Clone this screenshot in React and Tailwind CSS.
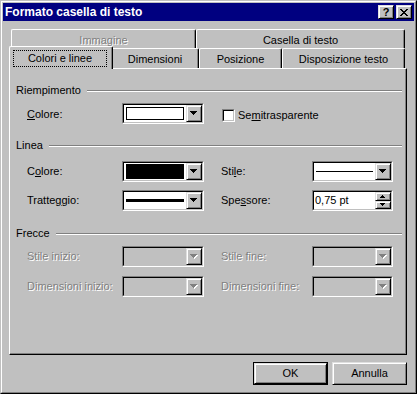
import React from "react";

const FONT = "font-['Liberation_Sans',Arial,sans-serif]";

function Arrow({ up = false, disabled = false, size = 7 }) {
  const h = Math.ceil(size / 2);
  const rows = [];
  for (let i = 0; i < h; i++) {
    const y = up ? h - 1 - i : i;
    rows.push(<rect key={i} x={i} y={y} width={size - 2 * i} height={1} />);
  }
  return (
    <svg width={size + 1} height={h + 1} shapeRendering="crispEdges" className="block">
      {disabled && (
        <g fill="#ffffff" transform="translate(1,1)">
          {rows}
        </g>
      )}
      <g fill={disabled ? "#808080" : "#000000"}>{rows}</g>
    </svg>
  );
}

function Raised({ className = "", children }) {
  return (
    <div
      className={`flex items-center justify-center bg-[#c0c0c0] border border-t-[#dfdfdf] border-l-[#dfdfdf] border-r-black border-b-black shadow-[inset_1px_1px_#fff,inset_-1px_-1px_#808080] ${className}`}
    >
      {children}
    </div>
  );
}

function Sunken({ className = "", innerClass = "", children }) {
  return (
    <div className={`border border-t-[#808080] border-l-[#808080] border-r-white border-b-white ${className}`}>
      <div
        className={`h-full w-full flex border border-t-black border-l-black border-r-[#c0c0c0] border-b-[#c0c0c0] ${innerClass}`}
      >
        {children}
      </div>
    </div>
  );
}

function Combo({ className, disabled = false, children }) {
  return (
    <Sunken className={`h-[21px] ${className}`} innerClass={disabled ? "bg-[#c0c0c0]" : "bg-white"}>
      <div className="flex-1 flex items-center pl-[2px] pr-[2px]">{children}</div>
      <Raised className="w-[16px] h-full">
        <Arrow disabled={disabled} />
      </Raised>
    </Sunken>
  );
}

function Header({ children, className = "" }) {
  return (
    <div className={`flex items-center h-[13px] ${className}`}>
      <span>{children}</span>
      <div className="flex-1 ml-[6px] h-[2px] border-t border-t-[#808080] border-b border-b-white" />
    </div>
  );
}

function Label({ children, className = "", disabled = false }) {
  return (
    <div
      className={`${className} whitespace-nowrap ${
        disabled ? "text-[#808080] [text-shadow:1px_1px_0_#fff]" : "text-black"
      }`}
    >
      {children}
    </div>
  );
}

function Tab({ children, className = "", disabled = false }) {
  return (
    <div
      className={`flex items-center justify-center pt-[2px] bg-[#c0c0c0] border-t border-l border-r border-t-white border-l-white border-r-black shadow-[inset_-1px_0_#808080] rounded-tl-[2px] rounded-tr-[2px] ${className}`}
    >
      <span className={disabled ? "text-[#808080] [text-shadow:1px_1px_0_#fff]" : "text-black"}>{children}</span>
    </div>
  );
}

export default function App() {
  return (
    <div className={`${FONT} text-[11px] leading-[13px] w-[417px] h-[394px] bg-[#c0c0c0] select-none`}>
      <div className="w-full h-full border border-t-[#c0c0c0] border-l-[#c0c0c0] border-r-black border-b-black">
        <div className="w-full h-full border border-t-white border-l-white border-r-[#808080] border-b-[#808080] p-[1px] flex flex-col">
          {/* Title bar */}
          <div className="h-[18px] bg-[#000080] flex items-center justify-between pl-[2px] pr-[2px]">
            <span className="text-white font-bold text-[12px] leading-[14px]">Formato casella di testo</span>
            <div className="flex items-center gap-[2px]">
              <Raised className="w-[16px] h-[14px]">
                <span className="font-bold text-[11px] leading-[11px] text-black">?</span>
              </Raised>
              <Raised className="w-[16px] h-[14px]">
                <svg width="8" height="7" shapeRendering="crispEdges" className="block">
                  <g fill="#000">
                    <rect x="0" y="0" width="2" height="1" />
                    <rect x="6" y="0" width="2" height="1" />
                    <rect x="1" y="1" width="2" height="1" />
                    <rect x="5" y="1" width="2" height="1" />
                    <rect x="2" y="2" width="4" height="1" />
                    <rect x="3" y="3" width="2" height="1" />
                    <rect x="2" y="4" width="4" height="1" />
                    <rect x="1" y="5" width="2" height="1" />
                    <rect x="5" y="5" width="2" height="1" />
                    <rect x="0" y="6" width="2" height="1" />
                    <rect x="6" y="6" width="2" height="1" />
                  </g>
                </svg>
              </Raised>
            </div>
          </div>

          {/* Body */}
          <div className="pl-[6px] pt-[8px] flex flex-col">
            {/* back tab row */}
            <div className="flex h-[19px] ml-[2px]">
              <Tab className="w-[185px]" disabled>
                Immagine
              </Tab>
              <Tab className="w-[209px]">Casella di testo</Tab>
            </div>
            {/* front tab row */}
            <div className="flex h-[20px] items-end ml-[2px]">
              <div className="relative z-10 -ml-[2px] -mr-[2px] -mb-[1px] w-[104px] h-[23px] bg-[#c0c0c0] border-t border-l border-r border-t-white border-l-white border-r-black shadow-[inset_-1px_0_#808080] rounded-tl-[2px] rounded-tr-[2px] pt-[3px] pl-[3px] pr-[5px] pb-[2px]">
                <div className="w-full h-[17px] border border-dotted border-black flex items-center justify-center">
                  Colori e linee
                </div>
              </div>
              <Tab className="w-[88px] h-[20px]">Dimensioni</Tab>
              <Tab className="w-[83px] h-[20px]">Posizione</Tab>
              <Tab className="w-[123px] h-[20px]">Disposizione testo</Tab>
            </div>

            {/* Panel */}
            <div className="w-[398px] h-[287px] bg-[#c0c0c0] border border-t-white border-l-white border-r-black border-b-black shadow-[inset_-1px_-1px_#808080] pl-[6px] pr-[4px] pt-[15px] flex flex-col">
              <Header>Riempimento</Header>
              <div className="flex items-center h-[21px] mt-[6px]">
                <Label className="w-[106px] pl-[11px] mt-[2px]">
                  <u>C</u>olore:
                </Label>
                <Combo className="w-[82px]">
                  <div className="w-full h-[13px] border border-black bg-white" />
                </Combo>
                <div className="ml-[18px] w-[13px] h-[13px] mt-[3px]">
                  <Sunken className="w-[13px] h-[13px]" innerClass="bg-white" />
                </div>
                <Label className="ml-[3px] mt-[3px]">
                  Se<u>m</u>itrasparente
                </Label>
              </div>

              <Header className="mt-[15px]">Linea</Header>
              <div className="flex items-center h-[21px] mt-[9px]">
                <Label className="w-[106px] pl-[11px]">
                  C<u>o</u>lore:
                </Label>
                <Combo className="w-[82px]">
                  <div className="w-full h-[15px] bg-black" />
                </Combo>
                <Label className="ml-[17px] w-[91px]">
                  Sti<u>l</u>e:
                </Label>
                <Combo className="w-[81px]">
                  <div className="w-full h-[1px] bg-black" />
                </Combo>
              </div>
              <div className="flex items-center h-[21px] mt-[8px]">
                <Label className="w-[106px] pl-[11px]">
                  Tratte<u>g</u>gio:
                </Label>
                <Combo className="w-[82px]">
                  <div className="w-full h-[3px] bg-black" />
                </Combo>
                <Label className="ml-[17px] w-[91px]">
                  Spe<u>s</u>sore:
                </Label>
                <Sunken className="w-[81px] h-[21px]" innerClass="bg-white">
                  <div className="flex-1 flex items-center pl-[1px] text-black">0,75 pt</div>
                  <div className="w-[16px] h-full flex flex-col">
                    <Raised className="w-full h-[9px]">
                      <Arrow up size={5} />
                    </Raised>
                    <Raised className="w-full h-[8px]">
                      <Arrow size={5} />
                    </Raised>
                  </div>
                </Sunken>
              </div>

              <Header className="mt-[16px]">Frecce</Header>
              <div className="flex items-center h-[21px] mt-[6px]">
                <Label className="w-[106px] pl-[11px]" disabled>
                  Stile inizio:
                </Label>
                <Combo className="w-[82px]" disabled />
                <Label className="ml-[17px] w-[91px]" disabled>
                  Stile fine:
                </Label>
                <Combo className="w-[81px]" disabled />
              </div>
              <div className="flex items-center h-[21px] mt-[9px]">
                <Label className="w-[106px] pl-[11px]" disabled>
                  Dimensioni inizio:
                </Label>
                <Combo className="w-[82px]" disabled />
                <Label className="ml-[17px] w-[91px]" disabled>
                  Dimensioni fine:
                </Label>
                <Combo className="w-[81px]" disabled />
              </div>
            </div>

            {/* Buttons */}
            <div className="w-[398px] flex justify-end gap-[4px] mt-[7px]">
              <div className="w-[75px] h-[23px] border border-black">
                <Raised className="w-full h-full">OK</Raised>
              </div>
              <Raised className="w-[75px] h-[23px]">Annulla</Raised>
            </div>
          </div>
        </div>
      </div>
    </div>
  );
}
